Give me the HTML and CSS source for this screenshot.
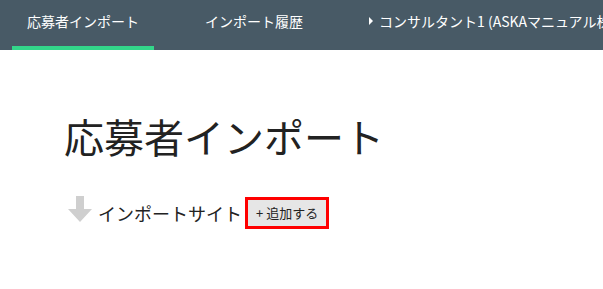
FILE: index.html
```html
<!DOCTYPE html>
<html lang="ja">
<head>
<meta charset="utf-8">
<link rel="stylesheet" href="styles.css">
</head>
<body>
<header class="nav">
  <a class="tab active">応募者インポート</a>
  <a class="tab">インポート履歴</a>
  <a class="tab user"><span class="caret"></span>コンサルタント1 (ASKAマニュアル株式会社)</a>
</header>
<main class="content">
  <h1 class="title">応募者インポート</h1>
  <div class="site-row">
    <svg class="arrow" width="24" height="26" viewBox="0 0 24 26">
      <path d="M8 0H16V13H24L12 26L0 13H8Z" fill="#cfcfcf"/>
    </svg>
    <span class="site-label">インポートサイト</span>
    <span class="highlight"><button class="add-btn">+ 追加する</button></span>
  </div>
</main>
</body>
</html>
```
FILE: styles.css
```css
html, body {
  margin: 0;
  padding: 0;
  background: #ffffff;
  font-family: "Noto Sans CJK JP", "Noto Sans", sans-serif;
}
.nav {
  height: 50px;
  background: #485a66;
  display: flex;
  align-items: stretch;
  padding-left: 12px;
  gap: 36px;
  overflow: hidden;
  white-space: nowrap;
}
.tab {
  display: flex;
  align-items: center;
  padding: 0 15px 4px;
  color: #ffffff;
  font-size: 14px;
  border-bottom: 4px solid transparent;
  box-sizing: border-box;
}
.tab.active {
  border-bottom-color: #33d68a;
}
.caret {
  display: inline-block;
  width: 0;
  height: 0;
  border-top: 4px solid transparent;
  border-bottom: 4px solid transparent;
  border-left: 4px solid #ffffff;
  margin-right: 6px;
}
.content {
  padding: 0 0 0 64px;
}
.title {
  margin: 0;
  padding-top: 62px;
  font-size: 40px;
  font-weight: 400;
  line-height: 48px;
  color: #222222;
}
.site-row {
  display: flex;
  align-items: center;
  margin-top: 37px;
  margin-left: 4px;
}
.arrow {
  display: block;
  margin-right: 6px;
  margin-top: -8px;
}
.site-label {
  font-size: 18px;
  color: #222222;
  margin-right: 3px;
}
.highlight {
  display: inline-block;
  border: 3px solid #ff0000;
}
.add-btn {
  display: block;
  margin: 0;
  font-family: inherit;
  font-size: 13px;
  line-height: 18px;
  padding: 4px 8px;
  background: #e6e6e6;
  border: 0;
  color: #222;
}
```
